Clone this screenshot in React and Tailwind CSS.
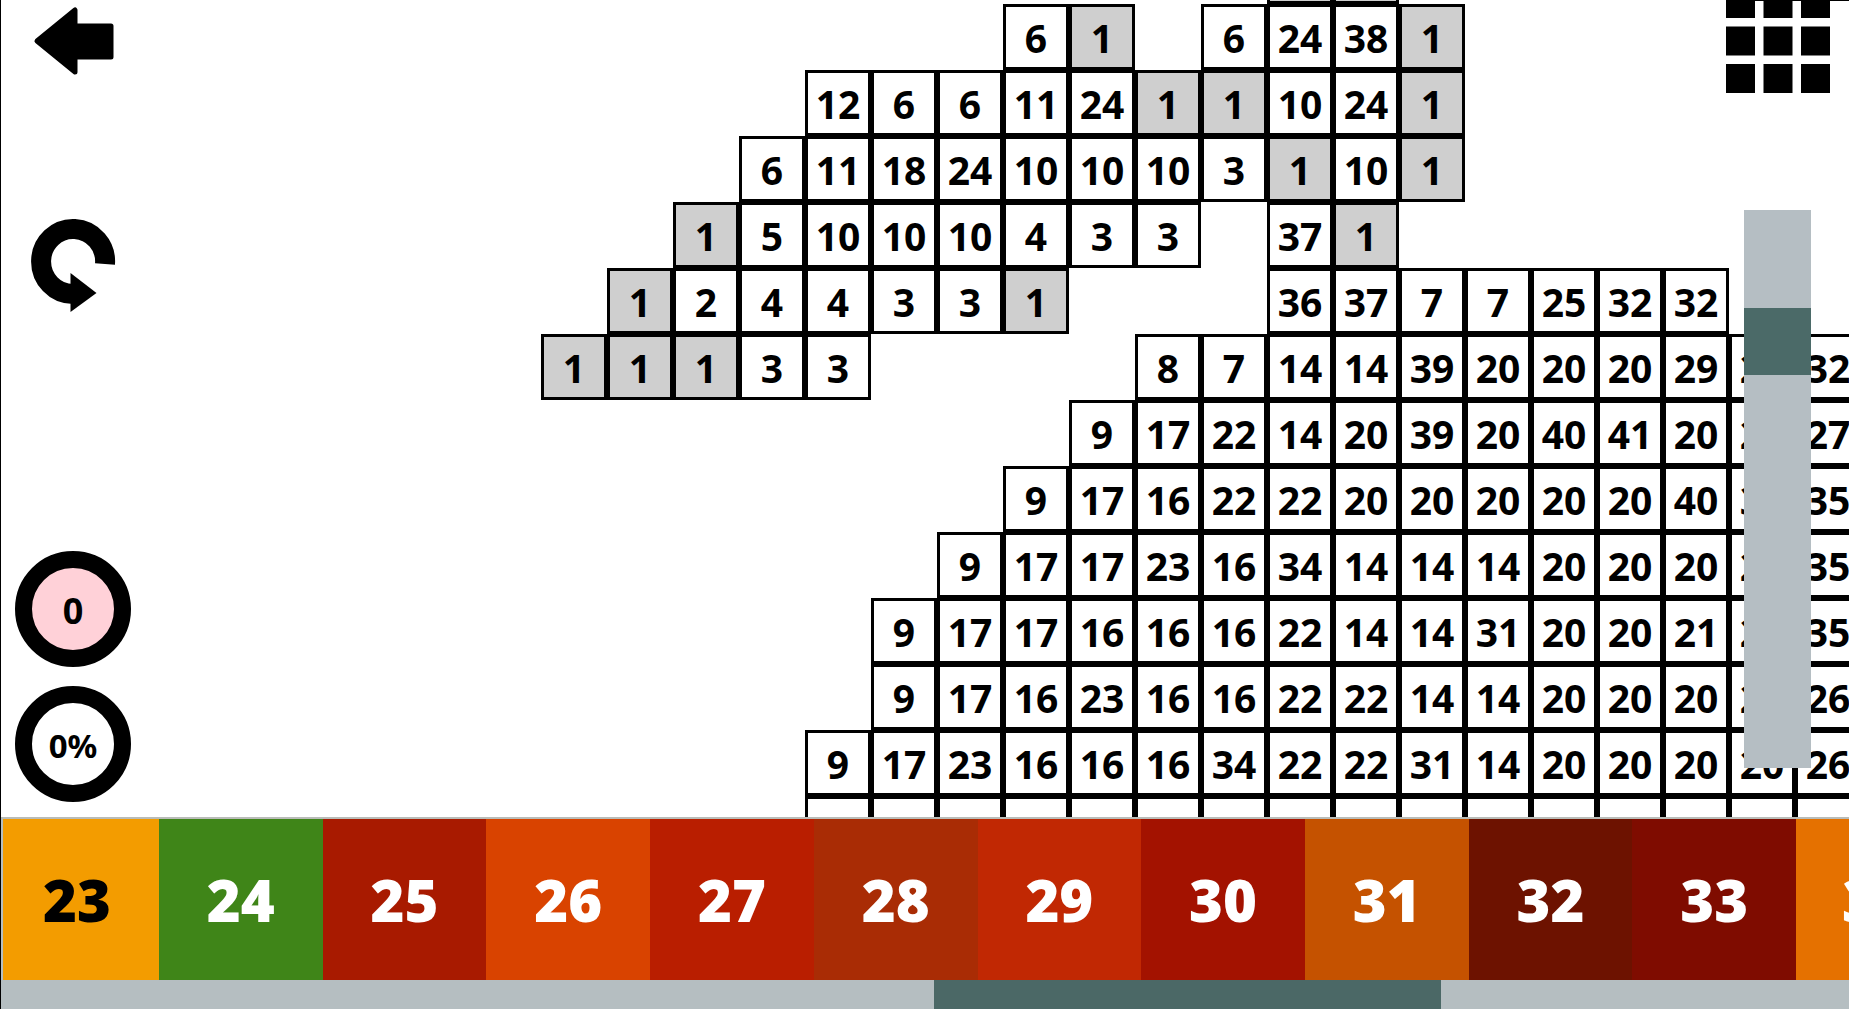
import React from "react";

// "." marks an empty place; every other entry is the colour number of a cell.
const ROWS = [
  ". . . . . . . . . . . 1 1",
  ". . . . . . . 6 1 . 6 24 38 1",
  ". . . . 12 6 6 11 24 1 1 10 24 1",
  ". . . 6 11 18 24 10 10 10 3 1 10 1",
  ". . 1 5 10 10 10 4 3 3 . 37 1",
  ". 1 2 4 4 3 3 1 . . . 36 37 7 7 25 32 32",
  "1 1 1 3 3 . . . . 8 7 14 14 39 20 20 20 29 29 32",
  ". . . . . . . . 9 17 22 14 20 39 20 40 41 20 20 27",
  ". . . . . . . 9 17 16 22 22 20 20 20 20 20 40 30 35",
  ". . . . . . 9 17 17 23 16 34 14 14 14 20 20 20 20 35",
  ". . . . . 9 17 17 16 16 16 22 14 14 31 20 20 21 20 35",
  ". . . . . 9 17 16 23 16 16 22 22 14 14 20 20 20 20 26",
  ". . . . 9 17 23 16 16 16 34 22 22 31 14 20 20 20 20 26",
  ". . . . 9 17 17 16 16 16 16 22 22 14 14 20 20 20 20 26",
].map((row) => row.split(" "));

const COLOURS = [
  [24, "bg-[#3f8518]"],
  [25, "bg-[#a81a00]"],
  [26, "bg-[#d94300]"],
  [27, "bg-[#b91e00]"],
  [28, "bg-[#a92c05]"],
  [29, "bg-[#c12803]"],
  [30, "bg-[#a31200]"],
  [31, "bg-[#c55200]"],
  [32, "bg-[#6d1200]"],
  [33, "bg-[#7f0c00]"],
];

function Cell({ value }) {
  if (value === ".") return <span className="size-[66px] shrink-0" />;
  return (
    <button
      className={`flex size-[66px] shrink-0 items-center justify-center border-3 border-black pt-px text-[39px] leading-none font-bold ${
        value === "1" ? "bg-[#cfcfcf]" : "bg-white"
      }`}
    >
      {value}
    </button>
  );
}

function Board() {
  return (
    <div className="-mt-[62px] flex flex-col">
      {ROWS.map((row, y) => (
        <div key={y} className="flex">
          {row.map((value, x) => (
            <Cell key={x} value={value} />
          ))}
        </div>
      ))}
    </div>
  );
}

function BackIcon() {
  return (
    <svg className="h-[70px] w-[82px]" viewBox="0 0 82 70" strokeLinejoin="round">
      <path
        d="M5 35 L43 4 L43 20 L79 20 L79 51 L43 51 L43 66 Z"
        fill="black"
        stroke="black"
        strokeWidth="5"
      />
    </svg>
  );
}

function UndoIcon() {
  return (
    <svg className="h-[96px] w-[86px]" viewBox="0 0 86 96">
      <path d="M75 47 A32 32.500 0 1 0 43 77" fill="none" stroke="black" strokeWidth="20" />
      <path d="M40.500 56 L66.500 76 L40.500 95 Z" />
    </svg>
  );
}

function GridIcon() {
  return (
    <svg className="h-[93px] w-[104px]" viewBox="0 0 104 93">
      {[0, 37.5, 75].map((x) =>
        [-11, 26.5, 64].map((y) => <rect key={`${x}-${y}`} x={x} y={y} width="29" height="29" />)
      )}
    </svg>
  );
}

function Palette() {
  return (
    <footer className="shrink-0 border-t-2 border-[#b9bcb8] bg-[#b5bec1]">
      <div className="flex h-[161px] pl-0.5 text-[58px] leading-none font-black text-white">
        <button className="w-[156px] bg-[#f39c00] pr-2 text-black">23</button>
        {COLOURS.map(([number, colour]) => (
          <button key={number} className={`flex-1 ${colour}`}>
            {number}
          </button>
        ))}
        <button className="w-[53px] overflow-hidden bg-[#e57100] pl-[46px] text-left">34</button>
      </div>
      <input
        type="range"
        aria-label="Scroll colours"
        max="1000"
        defaultValue="696"
        className="block h-[29px] w-full appearance-none bg-[#b5bec1] [&::-webkit-slider-thumb]:h-[29px] [&::-webkit-slider-thumb]:w-[507px] [&::-webkit-slider-thumb]:appearance-none [&::-webkit-slider-thumb]:bg-[#4b6866]"
      />
    </footer>
  );
}

export default function App() {
  return (
    <div className="flex h-screen flex-col overflow-hidden border-l border-black bg-white font-['Noto_Sans','Open_Sans',sans-serif] text-black">
      <main className="relative flex min-h-0 flex-1 overflow-hidden">
        <nav className="flex w-[540px] shrink-0 flex-col items-start justify-between pt-1.5 pb-[15px] pl-3.5">
          <div className="flex w-[116px] flex-col items-center gap-[141px]">
            <button aria-label="Back">
              <BackIcon />
            </button>
            <button aria-label="Undo">
              <UndoIcon />
            </button>
          </div>
          <div className="flex flex-col gap-[19px]">
            <button className="flex size-[116px] items-center justify-center rounded-full border-17 border-black bg-[#ffd1d8] pt-1 text-[36px] leading-none font-bold">
              0
            </button>
            <output className="flex size-[116px] items-center justify-center rounded-full border-17 border-black bg-white pt-0.5 text-[33px] leading-none font-bold">
              0%
            </output>
          </div>
        </nav>
        <Board />
        <div className="absolute top-0 right-0 w-[94px] border-t border-black" />
        <button aria-label="Overview" className="absolute top-0 right-[19px]">
          <GridIcon />
        </button>
        <input
          type="range"
          aria-label="Zoom"
          defaultValue="20"
          className="absolute top-[210px] right-[38px] bottom-[49px] w-[67px] appearance-none bg-[#b5bec3] [writing-mode:vertical-lr] [&::-webkit-slider-thumb]:size-[67px] [&::-webkit-slider-thumb]:appearance-none [&::-webkit-slider-thumb]:bg-[#4b6a68]"
        />
      </main>
      <Palette />
    </div>
  );
}
